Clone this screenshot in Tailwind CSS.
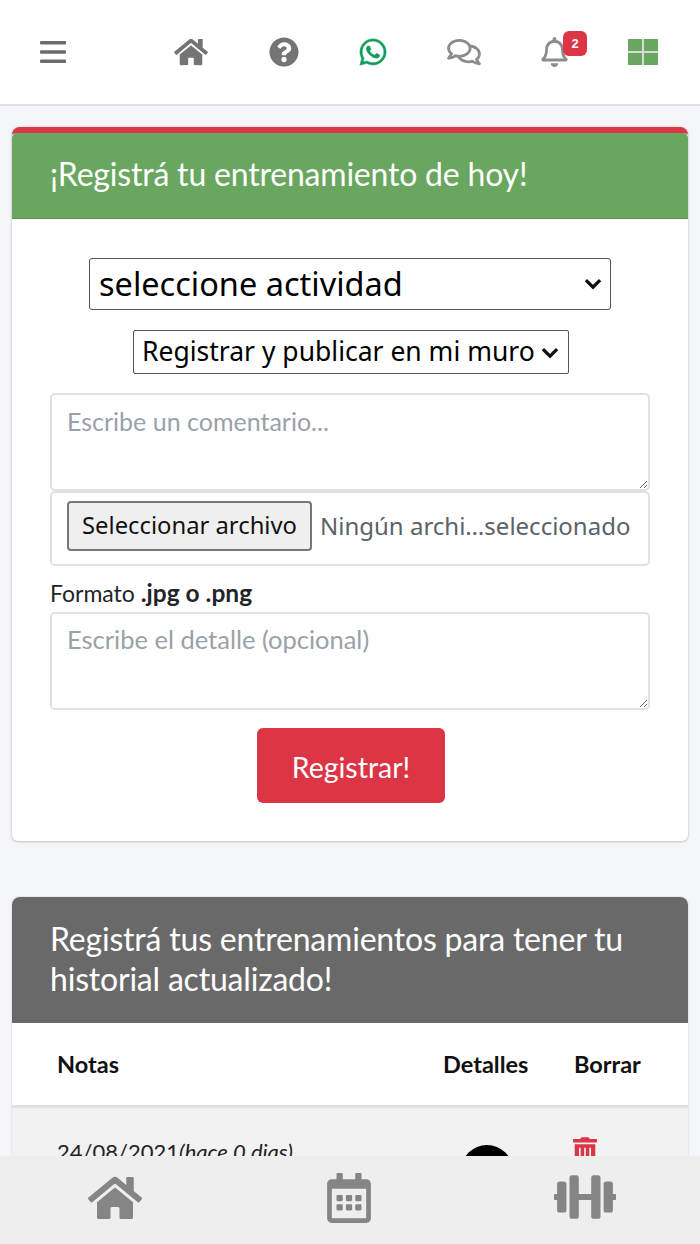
<!DOCTYPE html>
<html lang="en">
<head>
    <meta charset="UTF-8">
    <meta name="viewport" content="width=device-width, initial-scale=1.0">
    <title>Entrenamientos</title>
    <script src="https://cdn.jsdelivr.net/npm/@tailwindcss/browser@4"></script>
</head>
<body class="bg-[#f4f6f9] h-[1244px] overflow-hidden font-['Noto_Sans',sans-serif] text-[#212529]">

    <!-- top nav -->
    <nav class="h-[106px] bg-white border-b-2 border-[#dee2e6] flex items-center pl-10">
        <svg class="w-[26px] h-[22px]" viewBox="0 0 26 22" fill="#6c6c6c"><rect y="0" width="26" height="3.4" rx="1"/><rect y="9.3" width="26" height="3.4" rx="1"/><rect y="18.6" width="26" height="3.4" rx="1"/></svg>
        <svg class="w-[34px] h-[30px] ml-[108px]" viewBox="0 0 576 512" fill="#747474"><path d="M280.37 148.26L96 300.11V464a16 16 0 0 0 16 16l112.06-.29a16 16 0 0 0 15.92-16V368a16 16 0 0 1 16-16h64a16 16 0 0 1 16 16v95.64a16 16 0 0 0 16 16.05L464 480a16 16 0 0 0 16-16V300L295.67 148.26a12.19 12.19 0 0 0-15.3 0zM571.6 251.47L488 182.56V44.05a12 12 0 0 0-12-12h-56a12 12 0 0 0-12 12v72.61L318.47 43a48 48 0 0 0-61 0L4.34 251.47a12 12 0 0 0-1.6 16.9l25.5 31A12 12 0 0 0 45.15 301l235.22-193.74a12.19 12.19 0 0 1 15.3 0L530.9 301a12 12 0 0 0 16.9-1.6l25.5-31a12 12 0 0 0-1.7-16.93z"/></svg>
        <svg class="w-[30px] h-[30px] ml-[61px]" viewBox="0 0 512 512" fill="#747474"><path d="M504 256c0 136.997-111.043 248-248 248S8 392.997 8 256C8 119.083 119.043 8 256 8s248 111.083 248 248zM262.655 90c-54.497 0-89.255 22.957-116.549 63.758-3.536 5.286-2.353 12.415 2.715 16.258l34.699 26.31c5.205 3.947 12.621 3.008 16.665-2.122 17.864-22.658 30.113-35.797 57.303-35.797 20.429 0 45.698 13.148 45.698 32.958 0 14.976-12.363 22.667-32.534 33.976C247.128 238.528 216 254.941 216 296v4c0 6.627 5.373 12 12 12h56c6.627 0 12-5.373 12-12v-1.333c0-28.462 83.186-29.647 83.186-106.667 0-58.002-60.165-102-116.531-102zM256 338c-25.365 0-46 20.635-46 46 0 25.364 20.635 46 46 46s46-20.636 46-46c0-25.365-20.635-46-46-46z"/></svg>
        <svg class="w-[30px] h-[30px] ml-[59px]" viewBox="0 0 448 512" fill="#0f9d58" stroke="#0f9d58" stroke-width="10"><path d="M380.9 97.1C339 55.1 283.2 32 223.9 32c-122.4 0-222 99.6-222 222 0 39.1 10.2 77.3 29.6 111L0 480l117.7-30.9c32.4 17.7 68.9 27 106.1 27h.1c122.3 0 224.1-99.6 224.1-222 0-59.3-25.2-115-67.1-157zm-157 341.6c-33.2 0-65.7-8.9-94-25.7l-6.7-4-69.8 18.3L72 359.2l-4.4-7c-18.5-29.4-28.2-63.3-28.2-98.2 0-101.7 82.8-184.5 184.6-184.5 49.3 0 95.6 19.2 130.4 54.1 34.8 34.9 56.2 81.2 56.1 130.5 0 101.8-84.9 184.6-186.6 184.6zm101.2-138.2c-5.5-2.8-32.8-16.2-37.9-18-5.1-1.9-8.8-2.8-12.5 2.8-3.7 5.6-14.3 18-17.6 21.8-3.2 3.7-6.5 4.2-12 1.4-32.6-16.3-54-29.1-75.5-66-5.7-9.8 5.7-9.1 16.3-30.3 1.8-3.7.9-6.9-.5-9.7-1.4-2.8-12.5-30.1-17.1-41.2-4.5-10.8-9.1-9.3-12.5-9.5-3.2-.2-6.9-.2-10.6-.2-3.7 0-9.7 1.4-14.8 6.9-5.1 5.6-19.4 19-19.4 46.3 0 27.3 19.9 53.7 22.6 57.4 2.8 3.7 39.1 59.7 94.8 83.8 35.2 15.2 49 16.5 66.6 13.9 10.7-1.6 32.8-13.4 37.4-26.4 4.6-13 4.6-24.1 3.2-26.4-1.3-2.5-5-3.9-10.5-6.6z"/></svg>
        <svg class="w-[36px] h-[30px] ml-[58px]" viewBox="0 0 576 512" fill="#8c8c8c"><path d="M532 386.2c27.5-27.1 44-61.1 44-98.2 0-80-76.5-146.1-176.2-157.9C368.3 72.5 294.3 32 208 32 93.1 32 0 103.6 0 192c0 37 16.5 71 44 98.2-15.3 30.7-37.3 54.5-37.7 54.9-6.3 6.7-8.1 16.5-4.4 25 3.6 8.5 12 14 21.2 14 53.5 0 96.7-20.2 125.2-38.8 9.2 2.1 18.7 3.7 28.4 4.9C208.1 407.6 281.8 448 368 448c20.8 0 40.8-2.4 59.8-6.8C456.3 459.7 499.4 480 553 480c9.2 0 17.5-5.5 21.2-14 3.6-8.5 1.9-18.3-4.4-25-.4-.3-22.5-24.1-37.8-54.8zm-392.8-92.3L122.1 305c-14.1 9.1-28.5 16.3-43.1 21.4 2.7-4.7 5.4-9.7 8-14.8l15.5-31.1L77.7 256C64.2 242.6 48 220.7 48 192c0-60.7 73.3-112 160-112s160 51.3 160 112-73.3 112-160 112c-16.5 0-33-1.9-49-5.6l-19.8-4.5zM498.3 352l-24.7 24.4 15.5 31.1c2.6 5.1 5.3 10.1 8 14.8-14.6-5.1-29-12.3-43.1-21.4l-17.1-11.1-19.9 4.6c-16 3.7-32.5 5.6-49 5.6-54 0-102.2-20.1-131.3-49.7C338 339.5 416 272.9 416 192c0-3.4-.4-6.7-.7-10C479.7 196.5 528 238.8 528 288c0 28.7-16.2 50.6-29.7 64z"/></svg>
        <div class="relative ml-[59px] w-[27px] h-[30px]">
            <svg class="w-[27px] h-[30px]" viewBox="0 0 448 512" fill="#8c8c8c"><path d="M439.39 362.29c-19.32-20.76-55.47-51.99-55.47-154.29 0-77.7-54.48-139.9-127.94-155.16V32c0-17.67-14.32-32-31.98-32s-31.98 14.33-31.98 32v20.84C118.56 68.1 64.08 130.3 64.08 208c0 102.3-36.15 133.53-55.47 154.29-6 6.45-8.66 14.16-8.61 21.71.11 16.4 12.98 32 32.1 32h383.8c19.12 0 32-15.6 32.1-32 .05-7.55-2.61-15.27-8.61-21.71zM67.53 368c21.22-27.97 44.42-74.33 44.53-159.42 0-.2-.06-.38-.06-.58 0-61.86 50.14-112 112-112s112 50.14 112 112c0 .2-.06.38-.06.57.11 85.1 23.31 131.46 44.53 159.43H67.53zM224 512c35.32 0 63.97-28.65 63.97-64H160.03c0 35.35 28.65 64 63.97 64z"/></svg>
            <span class="absolute -top-[6px] left-[22px] w-[24px] h-[25px] bg-[#dc3545] rounded-[6px] text-white text-[13px] font-bold leading-[25px] text-center font-['Liberation_Sans',sans-serif]">2</span>
        </div>
        <div class="ml-[60px] w-[30px] h-[26px] grid grid-cols-2 grid-rows-2 gap-[2px] bg-[#d9dcd6]">
            <div class="bg-[#69a65f]"></div><div class="bg-[#69a65f]"></div><div class="bg-[#69a65f]"></div><div class="bg-[#69a65f]"></div>
        </div>
    </nav>

    <main class="px-3">
        <!-- registro card -->
        <section class="mt-[21px] bg-white border-t-[6px] border-[#dc3545] rounded-t-[8px] rounded-b-[6px] shadow-[0_0_2px_rgba(0,0,0,0.2),0_1px_3px_rgba(0,0,0,0.15)] h-[714px]">
            <h2 class="h-[86px] bg-[#69a65f] border-b border-[#5c9653] rounded-t-[5px] pl-[38px] pt-[19px] text-white text-[32px] leading-[44px] font-['Lato',sans-serif] tracking-[-0.2px]">¡Registrá tu entrenamiento de hoy!</h2>
            <div class="flex flex-col items-center px-[38px]">
                <div class="relative mt-[39px] w-[522px] h-[52px]">
                    <select class="appearance-none w-full h-full bg-white border border-[#555] rounded-[3px] pl-[9px] text-[32.5px] text-black">
                        <option>seleccione actividad</option>
                    </select>
                    <svg class="absolute right-[9px] top-[20px] w-[18px] h-[12px] pointer-events-none" viewBox="0 0 16 11" fill="none" stroke="#111" stroke-width="3"><path d="M1.5 2l6.5 6.5L14.5 2"/></svg>
                </div>
                <div class="relative mt-[20px] ml-[2px] w-[436px] h-[44px]">
                    <select class="appearance-none w-full h-full bg-white border border-[#555] rounded-[2px] pl-[8px] text-[26.5px] text-black">
                        <option>Registrar y publicar en mi muro</option>
                    </select>
                    <svg class="absolute right-[10px] top-[17px] w-[18px] h-[12px] pointer-events-none" viewBox="0 0 16 11" fill="none" stroke="#111" stroke-width="3"><path d="M1.5 2l6.5 6.5L14.5 2"/></svg>
                </div>
                <textarea class="mt-[19px] w-full h-[98px] block border-2 border-[#dde2e7] rounded-[5px] px-[15px] py-[10px] text-[25px] leading-[32px] placeholder:text-[#9aa1a8] font-['Lato',sans-serif]" placeholder="Escribe un comentario..."></textarea>
                <div class="w-full h-[75px] border-2 border-[#dde2e7] rounded-[5px] flex items-start pt-[8px] pl-[15px] text-[#5c6268] text-[24px] whitespace-nowrap">
                    <button class="w-[245px] h-[50px] bg-[#efefef] border-2 border-[#767676] rounded-[4px] text-[#111] text-[23.8px] mr-[8px]">Seleccionar archivo</button>
                    <span class="leading-[50px]">Ningún archi…seleccionado</span>
                </div>
                <p class="w-full mt-[12px] text-[23px] leading-[30px] font-['Lato',sans-serif]">Formato <b class="text-[24.5px]">.jpg o .png</b></p>
                <textarea class="mt-[4px] w-full h-[98px] block border-2 border-[#dde2e7] rounded-[5px] px-[15px] py-[9px] text-[25.5px] leading-[32px] placeholder:text-[#9aa1a8] font-['Lato',sans-serif]" placeholder="Escribe el detalle (opcional)"></textarea>
                <button class="mt-[18px] ml-[2px] w-[188px] h-[75px] pt-[3px] bg-[#dc3545] rounded-[6px] text-white text-[28.5px] font-['Lato',sans-serif]">Registrar!</button>
            </div>
        </section>

        <!-- historial card -->
        <section class="mt-[56px] bg-white rounded-t-[8px] shadow-[0_0_2px_rgba(0,0,0,0.2)]">
            <h2 class="h-[126px] bg-[#696969] rounded-t-[8px] px-[38px] pt-[22px] text-white text-[32px] leading-[40px] font-['Lato',sans-serif] tracking-[-0.2px]">Registrá tus entrenamientos para tener tu historial actualizado!</h2>
            <div class="h-[85px] pt-[2px] border-b-[3px] border-[#dee2e6] flex items-center text-[23.5px] font-bold text-[#111] font-['Lato',sans-serif]">
                <span class="ml-[45px] w-[386px]">Notas</span>
                <span class="w-[131px]">Detalles</span>
                <span>Borrar</span>
            </div>
            <div class="h-[136px] bg-[#f2f2f2] flex items-start text-[22px] font-['Lato',sans-serif] text-[#222]">
                <span class="ml-[45px] mt-[27px] w-[404px]">24/08/2021<i>(hace 0 dias)</i></span>
                <div class="mt-[37px] w-[52px] h-[52px] rounded-full bg-black"></div>
                <svg class="ml-[60px] mt-[29px] w-[24px] h-[28px]" viewBox="0 0 448 512" fill="#dc3545"><path d="M32 464a48 48 0 0 0 48 48h288a48 48 0 0 0 48-48V128H32zm272-256a16 16 0 0 1 32 0v224a16 16 0 0 1-32 0zm-96 0a16 16 0 0 1 32 0v224a16 16 0 0 1-32 0zm-96 0a16 16 0 0 1 32 0v224a16 16 0 0 1-32 0zM432 32H312l-9.4-18.7A24 24 0 0 0 281.1 0H166.8a23.72 23.72 0 0 0-21.4 13.3L136 32H16A16 16 0 0 0 0 48v32a16 16 0 0 0 16 16h416a16 16 0 0 0 16-16V48a16 16 0 0 0-16-16z"/></svg>
            </div>
        </section>
    </main>

    <!-- bottom bar -->
    <footer class="fixed bottom-0 left-0 w-full h-[88px] bg-[#eeeeee] flex items-start pt-[18px]">
        <svg class="ml-[87px] w-[56px] h-[48px]" viewBox="0 0 576 512" fill="#858585"><path d="M280.37 148.26L96 300.11V464a16 16 0 0 0 16 16l112.06-.29a16 16 0 0 0 15.92-16V368a16 16 0 0 1 16-16h64a16 16 0 0 1 16 16v95.64a16 16 0 0 0 16 16.05L464 480a16 16 0 0 0 16-16V300L295.67 148.26a12.19 12.19 0 0 0-15.3 0zM571.6 251.47L488 182.56V44.05a12 12 0 0 0-12-12h-56a12 12 0 0 0-12 12v72.61L318.47 43a48 48 0 0 0-61 0L4.34 251.47a12 12 0 0 0-1.6 16.9l25.5 31A12 12 0 0 0 45.15 301l235.22-193.74a12.19 12.19 0 0 1 15.3 0L530.9 301a12 12 0 0 0 16.9-1.6l25.5-31a12 12 0 0 0-1.7-16.93z"/></svg>
        <svg class="ml-[184px] -mt-[1px] w-[44px] h-[50px]" viewBox="0 0 448 512" fill="#858585"><path d="M148 288h-40c-6.6 0-12-5.4-12-12v-40c0-6.6 5.4-12 12-12h40c6.6 0 12 5.4 12 12v40c0 6.6-5.4 12-12 12zm108-12v-40c0-6.6-5.4-12-12-12h-40c-6.6 0-12 5.4-12 12v40c0 6.6 5.4 12 12 12h40c6.6 0 12-5.4 12-12zm96 0v-40c0-6.6-5.4-12-12-12h-40c-6.6 0-12 5.4-12 12v40c0 6.6 5.4 12 12 12h40c6.6 0 12-5.4 12-12zm-96 96v-40c0-6.6-5.4-12-12-12h-40c-6.6 0-12 5.4-12 12v40c0 6.6 5.4 12 12 12h40c6.6 0 12-5.4 12-12zm-96 0v-40c0-6.6-5.4-12-12-12h-40c-6.6 0-12 5.4-12 12v40c0 6.6 5.4 12 12 12h40c6.6 0 12-5.4 12-12zm192 0v-40c0-6.6-5.4-12-12-12h-40c-6.6 0-12 5.4-12 12v40c0 6.6 5.4 12 12 12h40c6.6 0 12-5.4 12-12zm96-260v352c0 26.5-21.5 48-48 48H48c-26.5 0-48-21.5-48-48V112c0-26.5 21.5-48 48-48h48V12c0-6.6 5.4-12 12-12h40c6.6 0 12 5.4 12 12v52h128V12c0-6.6 5.4-12 12-12h40c6.6 0 12 5.4 12 12v52h48c26.5 0 48 21.5 48 48zm-48 346V160H48v298c0 3.3 2.7 6 6 6h340c3.3 0 6-2.7 6-6z"/></svg>
        <svg class="ml-[183px] -mt-[5px] w-[62px] h-[56px]" viewBox="0 0 640 512" fill="#858585"><path d="M104 96H56c-13.3 0-24 10.7-24 24v104H8c-4.4 0-8 3.6-8 8v48c0 4.4 3.6 8 8 8h24v104c0 13.3 10.7 24 24 24h48c13.3 0 24-10.7 24-24V120c0-13.3-10.7-24-24-24zm528 128h-24V120c0-13.3-10.7-24-24-24h-48c-13.3 0-24 10.7-24 24v272c0 13.3 10.7 24 24 24h48c13.3 0 24-10.7 24-24V288h24c4.4 0 8-3.6 8-8v-48c0-4.4-3.6-8-8-8zM456 32h-48c-13.3 0-24 10.7-24 24v168H256V56c0-13.3-10.7-24-24-24h-48c-13.3 0-24 10.7-24 24v400c0 13.3 10.7 24 24 24h48c13.3 0 24-10.7 24-24V288h128v168c0 13.3 10.7 24 24 24h48c13.3 0 24-10.7 24-24V56c0-13.3-10.7-24-24-24z"/></svg>
    </footer>
</body>
</html>
